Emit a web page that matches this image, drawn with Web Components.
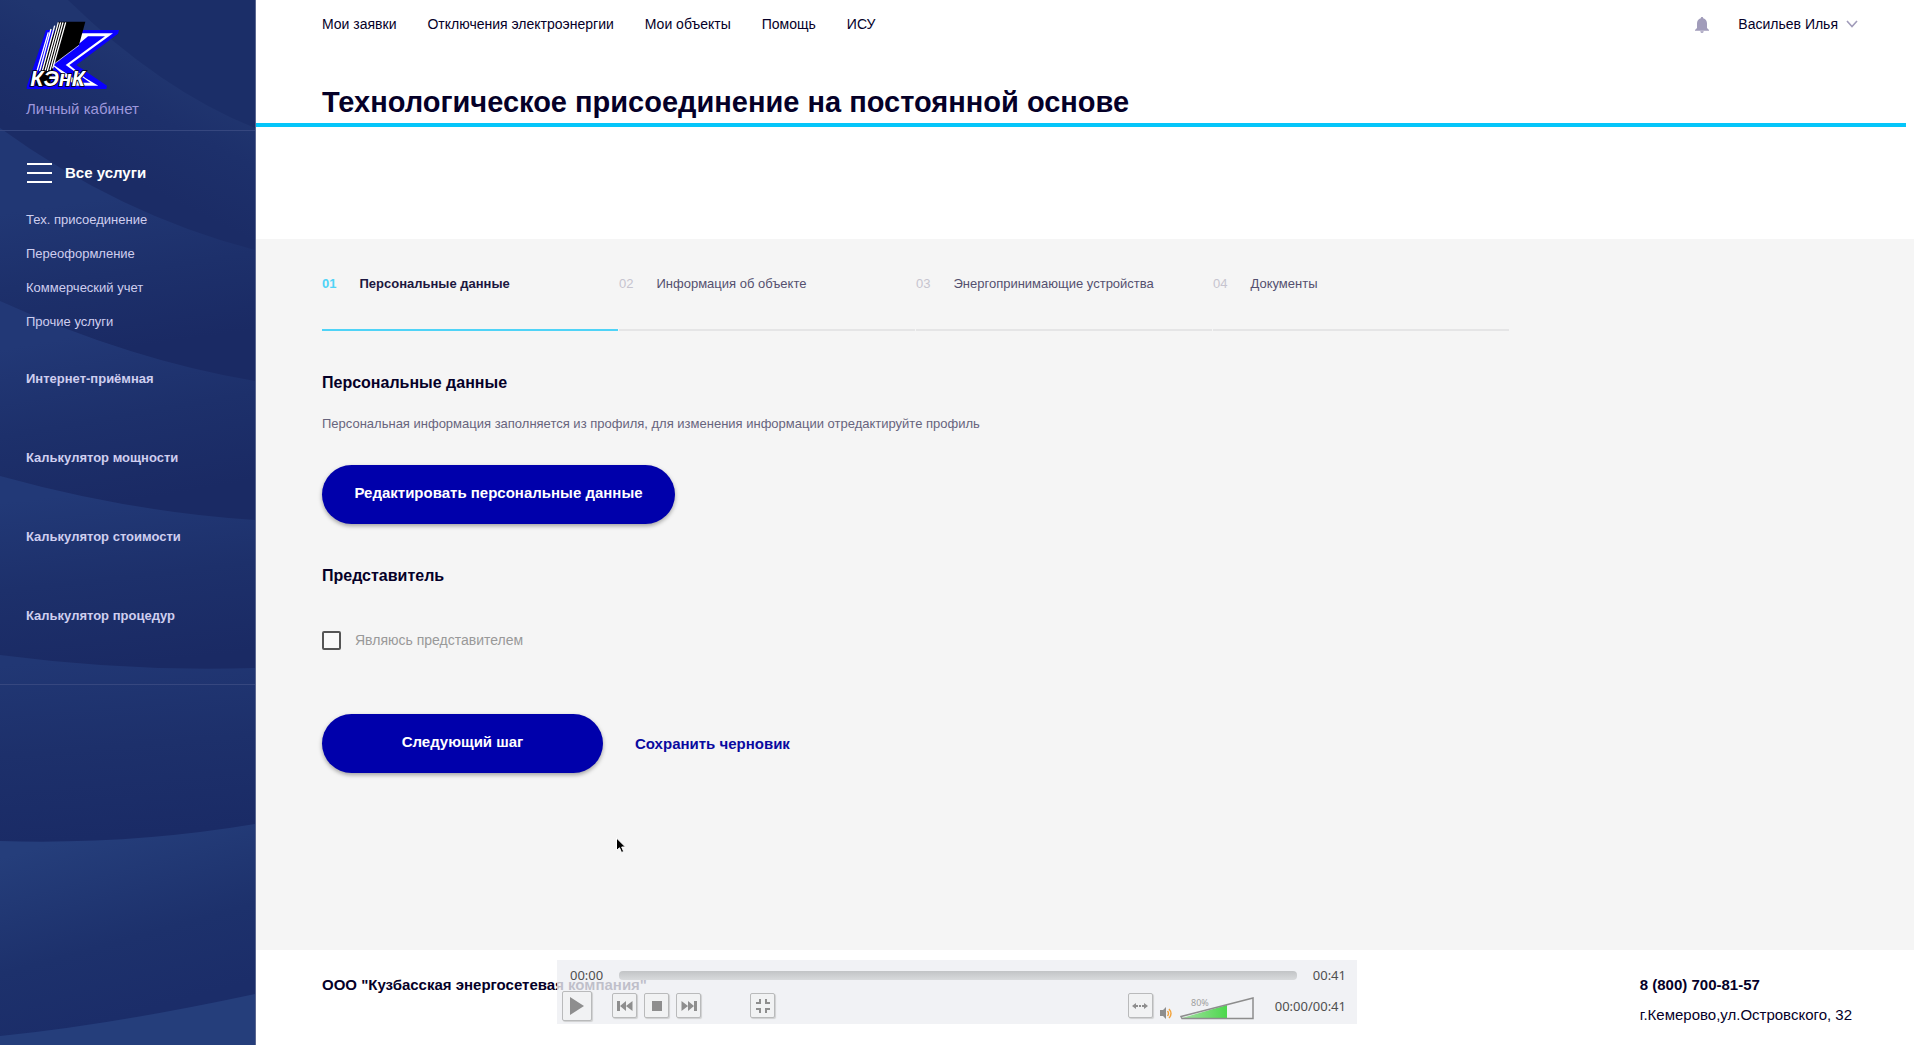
<!DOCTYPE html>
<html lang="ru">
<head>
<meta charset="utf-8">
<title>Личный кабинет</title>
<style>
  html, body { margin: 0; height: 100%; }
  body { font-family: "Liberation Sans", Arial, sans-serif; color: #050028; background: #fff; font-size: 14px; line-height: 20px; }
</style>
</head>
<body>
<kenk-app></kenk-app>
<script>
const define = (name, html) => {
  const template = document.createElement('template');
  template.innerHTML = html;
  customElements.define(name, class extends HTMLElement {
    constructor() {
      super();
      this.attachShadow({ mode: 'open' }).append(template.content.cloneNode(true));
    }
  });
};

define('kenk-logo', `
<style>
  :host { display: block; }
  svg { display: block; width: 94px; height: 70px; }
</style>
<svg viewBox="77 64 282 210" role="img" aria-label="КЭнК">
  <path fill="#0a00ff" d="M137 91H356L353 102L228 196L320 258L318 268H79L80 258Z"/>
  <path fill="#fff" d="M239 101H338L207 196L255 235L294 258H225L160 200Z"/>
  <path fill="#0a00ff" d="M263 110H314L196 196L262 244L270 249H240L160 196Z"/>
  <path fill="#000" d="M174 66H255L236 136L161 194L148 258H104L118 204Z"/>
  <path fill="#0a00ff" d="M137 92H158L120 222H100Z"/>
  <path stroke="#fff" stroke-width="4" fill="none" d="M144 98L110 214M152 88L118 214M163 78L126 214"/>
  <path stroke="#fff" stroke-width="4" fill="none" d="M174 68L134 214M181 68L141 214M188 68L149 212M196 68L157 206"/>
  <path stroke="#fff" stroke-width="2" fill="none" d="M236 137L161 193"/>
  <text x="90" y="258" fill="#fff" stroke="#000" stroke-width="5" paint-order="stroke" font-family="Liberation Sans" font-size="64" font-weight="bold" font-style="italic">КЭнК</text>
</svg>`);

define('side-waves', `
<style>
  :host { display: block; }
  svg { display: block; width: 100%; height: 100%; }
</style>
<svg viewBox="0 0 255 1045" preserveAspectRatio="none" aria-hidden="true">
  <defs>
    <linearGradient id="a" gradientUnits="userSpaceOnUse" x1="160" y1="70" x2="110" y2="170"><stop offset="0" stop-color="#20356f"/><stop offset=".4" stop-color="#1d306b"/><stop offset="1" stop-color="#1b2c66"/></linearGradient>
    <linearGradient id="b" gradientUnits="userSpaceOnUse" x1="128" y1="195" x2="150" y2="345"><stop offset="0" stop-color="#213774"/><stop offset=".5" stop-color="#1d306b"/><stop offset="1" stop-color="#1a2a64"/></linearGradient>
    <linearGradient id="c" gradientUnits="userSpaceOnUse" x1="110" y1="330" x2="140" y2="500"><stop offset="0" stop-color="#223876"/><stop offset=".5" stop-color="#1d306b"/><stop offset="1" stop-color="#1a2a64"/></linearGradient>
    <linearGradient id="d" gradientUnits="userSpaceOnUse" x1="110" y1="490" x2="130" y2="665"><stop offset="0" stop-color="#223977"/><stop offset=".5" stop-color="#1d306b"/><stop offset="1" stop-color="#1a2a64"/></linearGradient>
    <linearGradient id="e" gradientUnits="userSpaceOnUse" x1="120" y1="655" x2="135" y2="835"><stop offset="0" stop-color="#213774"/><stop offset=".5" stop-color="#1d306b"/><stop offset="1" stop-color="#1a2b66"/></linearGradient>
    <linearGradient id="f" gradientUnits="userSpaceOnUse" x1="100" y1="830" x2="150" y2="1010"><stop offset="0" stop-color="#253e7b"/><stop offset=".6" stop-color="#1d316c"/><stop offset="1" stop-color="#1b2d69"/></linearGradient>
  </defs>
  <rect width="255" height="1045" fill="#1b2e68"/>
  <path fill="url(#a)" d="M0 0H68Q160 90 255 128V300H0Z"/>
  <path fill="url(#b)" d="M0 128Q120 215 255 250V390L0 310Z"/>
  <path fill="url(#c)" d="M0 301Q130 360 255 381V530L0 485Z"/>
  <path fill="url(#d)" d="M0 476Q130 512 255 520V680H0Z"/>
  <path fill="url(#e)" d="M0 655Q130 672 255 668V850H0Z"/>
  <path fill="url(#f)" d="M0 841Q130 845 255 824V1045H0Z"/>
  <path fill="#253e7b" d="M0 1036Q110 1025 255 994V1045H0Z"/>
</svg>`);

define('side-bar', `
<style>
  :host { display: block; position: relative; box-sizing: border-box; width: 256px; flex: none; border-right: 1px solid #5a6791; background: #1b2e68; color: #cfceef; font-size: 13px; }
  side-waves { position: absolute; inset: 0; }
  .content { position: relative; }
  .brand { box-sizing: border-box; border-bottom: 1px solid #36477f; padding: 21px 26px 0; color: #9d97dc; font-size: 15px; height: 131px; }
  .brand a { color: inherit; text-decoration: none; display: block; }
  .brand span { display: block; margin-top: 8px; }
  nav { border-bottom: 1px solid #36477f; padding: 28px 26px 29px; }
  ul { list-style: none; margin: 0; padding: 0; }
  a { color: inherit; text-decoration: none; }
  button { all: unset; display: flex; align-items: center; gap: 13px; height: 28px; font: bold 15px/20px "Liberation Sans", sans-serif; color: #fff; margin-bottom: 16px; cursor: pointer; }
  .sub li { line-height: 34px; }
  .top li { line-height: 79px; font-weight: bold; }
</style>
<side-waves></side-waves>
<div class="content">
  <div class="brand"><a href="#"><kenk-logo></kenk-logo><span>Личный кабинет</span></a></div>
  <nav>
    <button type="button"><svg width="26" height="20" viewBox="0 0 26 20" aria-hidden="true"><path d="M1 1H26M1 10H26M1 19H26" stroke="#fff" stroke-width="2"/></svg>Все услуги</button>
    <ul class="sub">
      <li><a href="#">Тех. присоединение</a></li>
      <li><a href="#">Переоформление</a></li>
      <li><a href="#">Коммерческий учет</a></li>
      <li><a href="#">Прочие услуги</a></li>
    </ul>
    <ul class="top">
      <li><a href="#">Интернет-приёмная</a></li>
      <li><a href="#">Калькулятор мощности</a></li>
      <li><a href="#">Калькулятор стоимости</a></li>
      <li><a href="#">Калькулятор процедур</a></li>
    </ul>
  </nav>
</div>`);

define('top-bar', `
<style>
  :host { display: flex; justify-content: space-between; align-items: center; height: 48px; padding: 0 56px 0 66px; }
  nav { display: flex; gap: 31px; }
  a { color: inherit; text-decoration: none; }
  .user { display: flex; align-items: center; gap: 29px; }
  button { all: unset; display: flex; align-items: center; gap: 8px; cursor: pointer; }
  svg { display: block; }
</style>
<nav>
  <a href="#">Мои заявки</a><a href="#">Отключения электроэнергии</a><a href="#">Мои объекты</a><a href="#">Помощь</a><a href="#">ИСУ</a>
</nav>
<div class="user">
  <button type="button" aria-label="Уведомления"><svg width="14" height="18" viewBox="0 -2 14 18"><path fill="#a19cba" d="M7 0c.8 0 1.200.5 1.200 1.200C10.800 1.800 12 4 12 6.500V11l2 2v.7H0V13l2-2V6.500C2 4 3.200 1.800 5.800 1.200 5.800.5 6.200 0 7 0ZM5.300 14.300h3.400C8.600 15.400 8 16 7 16s-1.600-.6-1.700-1.700Z"/></svg></button>
  <button type="button">Васильев Илья<svg width="12" height="8" viewBox="0 0 12 8" aria-hidden="true"><path d="M1 1L6 6.500L11 1" fill="none" stroke="#a19cba" stroke-width="1.600"/></svg></button>
</div>`);

define('page-title', `
<style>
  :host { display: block; margin-right: 8px; padding: 35px 0 2px 66px; border-bottom: 4px solid #05c6fa; }
  h1 { margin: 0; font-size: 29px; line-height: 38px; }
</style>
<h1><slot></slot></h1>`);

define('form-step', `
<style>
  :host { display: flex; flex: 1; gap: 23px; box-sizing: border-box; height: 57px; border-bottom: 2px solid #e5e5e6; color: #54506f; font-size: 13px; }
  :host([active]) { border-color: #4fd3f7; color: #1c1740; font-weight: bold; }
  .n { color: #c6c4cf; }
  :host([active]) .n { color: #4fd3f7; }
</style>
<span class="n"><slot name="number"></slot></span><span><slot></slot></span>`);

define('pill-button', `
<style>
  :host { display: inline-flex; }
  button { border: 0; border-radius: 30px; width: 100%; height: 59px; padding: 0 28px 4px; background: #0000ab; color: #fff; font: bold 15px/20px "Liberation Sans", sans-serif; box-shadow: 0 2px 4px rgba(0,0,0,.35); white-space: nowrap; cursor: pointer; }
</style>
<button type="button"><slot></slot></button>`);

define('request-form', `
<style>
  :host { display: block; background: #f5f5f5; flex: 1; padding: 35px 66px 0; }
  .steps { display: flex; gap: 1px; max-width: 1187px; margin-bottom: 42px; }
  h2 { margin: 0; font-size: 16px; line-height: 20px; }
  p { margin: 21px 0 31px; color: #67647d; font-size: 13px; }
  .edit { width: 353px; }
  .rep { margin-top: 42px; }
  label { display: flex; align-items: center; gap: 14px; margin: 44px 0 64px; color: #999; height: 20px; width: fit-content; }
  input { appearance: none; box-sizing: border-box; width: 19px; height: 19px; margin: 0; border: 2px solid #555; border-radius: 2px; background: #f9f9f9; }
  .actions { display: flex; align-items: center; gap: 32px; }
  .next { width: 281px; }
  .actions a { color: #0a0aa0; font-size: 15px; font-weight: bold; text-decoration: none; }
</style>
<div class="steps">
  <form-step active><span slot="number">01</span>Персональные данные</form-step>
  <form-step><span slot="number">02</span>Информация об объекте</form-step>
  <form-step><span slot="number">03</span>Энергопринимающие устройства</form-step>
  <form-step><span slot="number">04</span>Документы</form-step>
</div>
<h2>Персональные данные</h2>
<p>Персональная информация заполняется из профиля, для изменения информации отредактируйте профиль</p>
<pill-button class="edit">Редактировать персональные данные</pill-button>
<h2 class="rep">Представитель</h2>
<label for="rep"><input type="checkbox" id="rep">Являюсь представителем</label>
<div class="actions"><pill-button class="next">Следующий шаг</pill-button><a href="#">Сохранить черновик</a></div>`);

define('page-footer', `
<style>
  :host { display: flex; justify-content: space-between; box-sizing: border-box; height: 95px; padding: 25px 62px 0 66px; font-size: 15px; }
  .contacts { display: flex; flex-direction: column; gap: 10px; }
  a { color: inherit; text-decoration: none; font-weight: bold; }
</style>
<b>ООО "Кузбасская энергосетевая компания"</b>
<div class="contacts"><a href="tel:88007008157">8 (800) 700-81-57</a><span>г.Кемерово,ул.Островского, 32</span></div>`);

define('video-player', `
<style>
  :host { display: flex; flex-direction: column; box-sizing: border-box; width: 800px; height: 64px; padding: 9px 11px 0 5px; background: rgba(237,239,242,.8); color: #4f4f4f; font: 13px/12px "Noto Sans", sans-serif; }
  .row { display: flex; align-items: center; }
  .seek { gap: 16px; padding-left: 8px; }
  .seek i { flex: 1; height: 9px; border-radius: 4px; background: linear-gradient(#c2c4c6, #d8dadc); }
  .controls { height: 31px; margin-top: 9px; gap: 7px; }
  button { display: grid; place-items: center; box-sizing: border-box; width: 25px; height: 25px; padding: 0; border: 1px solid #b9babb; border-radius: 2px; background: #f1f2f3; box-shadow: 1px 1px 1px #cfd0d1; }
  .play { width: 30px; height: 30px; margin-right: 13px; }
  .fit { margin-left: 42px; }
  .wide { margin-left: auto; }
  .volume { display: block; }
  .clock { margin-left: 12px; }
  svg { fill: #8e8e8e; display: block; }
</style>
<div class="row seek"><span>00:00</span><i></i><span>00:41</span></div>
<div class="row controls">
  <button class="play" aria-label="Play"><svg width="14" height="18"><path d="M0 0L14 9L0 18Z"/></svg></button>
  <button aria-label="Previous"><svg width="16" height="12"><path d="M0 1H3V11H0ZM9 1V11L3 6ZM15.500 1V11L9 6Z"/></svg></button>
  <button aria-label="Stop"><svg width="10" height="10"><path d="M0 0H10V10H0Z"/></svg></button>
  <button aria-label="Next"><svg width="16" height="12"><path d="M13 1H16V11H13ZM7 1V11L13 6ZM.5 1V11L7 6Z"/></svg></button>
  <button class="fit" aria-label="Exit full screen"><svg width="14" height="14"><path d="M3 0H5V5H0V3H3ZM11 0H9V5H14V3H11ZM3 14H5V9H0V11H3ZM11 14H9V9H14V11H11Z"/></svg></button>
  <button class="wide" aria-label="Fit width"><svg width="16" height="8"><path d="M0 4L4 1V3H6V5H4V7ZM16 4L12 1V3H10V5H12V7ZM7 3H9V5H7Z"/></svg></button>
  <svg class="volume" width="96" height="31" viewBox="0 0 96 31" role="img" aria-label="80%">
    <defs><linearGradient id="g"><stop offset="0" stop-color="#a5dfa3"/><stop offset="1" stop-color="#4cd84c"/></linearGradient></defs>
    <path d="M0 20H3L6 17V29L3 26H0Z"/>
    <path d="M7.500 21Q9.500 23.500 7.500 26M9 19Q13 23.500 9 28" fill="none" stroke="#f2a33c" stroke-width="1.400"/>
    <path fill="url(#g)" d="M22 28L67 15V28Z"/>
    <path d="M21 26.500L93 8V28.500H22Z" fill="none" stroke="#8d8d8d" stroke-width="1.500"/>
    <text x="31" y="16" font-size="9" fill="#a0a0a0" font-family="Noto Sans">80%</text>
  </svg>
  <span class="clock">00:00/00:41</span>
</div>`);

define('kenk-app', `
<style>
  :host { display: flex; min-height: 100vh; position: relative; }
  main { flex: 1; min-width: 0; display: flex; flex-direction: column; }
  page-title { margin-bottom: 112px; }
  video-player { position: absolute; left: 557px; bottom: 21px; }
  .pointer { position: absolute; left: 616px; top: 837px; }
</style>
<side-bar></side-bar>
<main>
  <top-bar></top-bar>
  <page-title>Технологическое присоединение на постоянной основе</page-title>
  <request-form></request-form>
  <page-footer></page-footer>
</main>
<video-player></video-player>
<svg class="pointer" width="11" height="17" viewBox="0 0 11 17" aria-hidden="true"><path d="M.5 1V13.500L3.500 10.800L5.500 15.500L7.700 14.500L5.700 10H9.500Z" fill="#000" stroke="#fff"/></svg>`);
</script>
</body>
</html>
